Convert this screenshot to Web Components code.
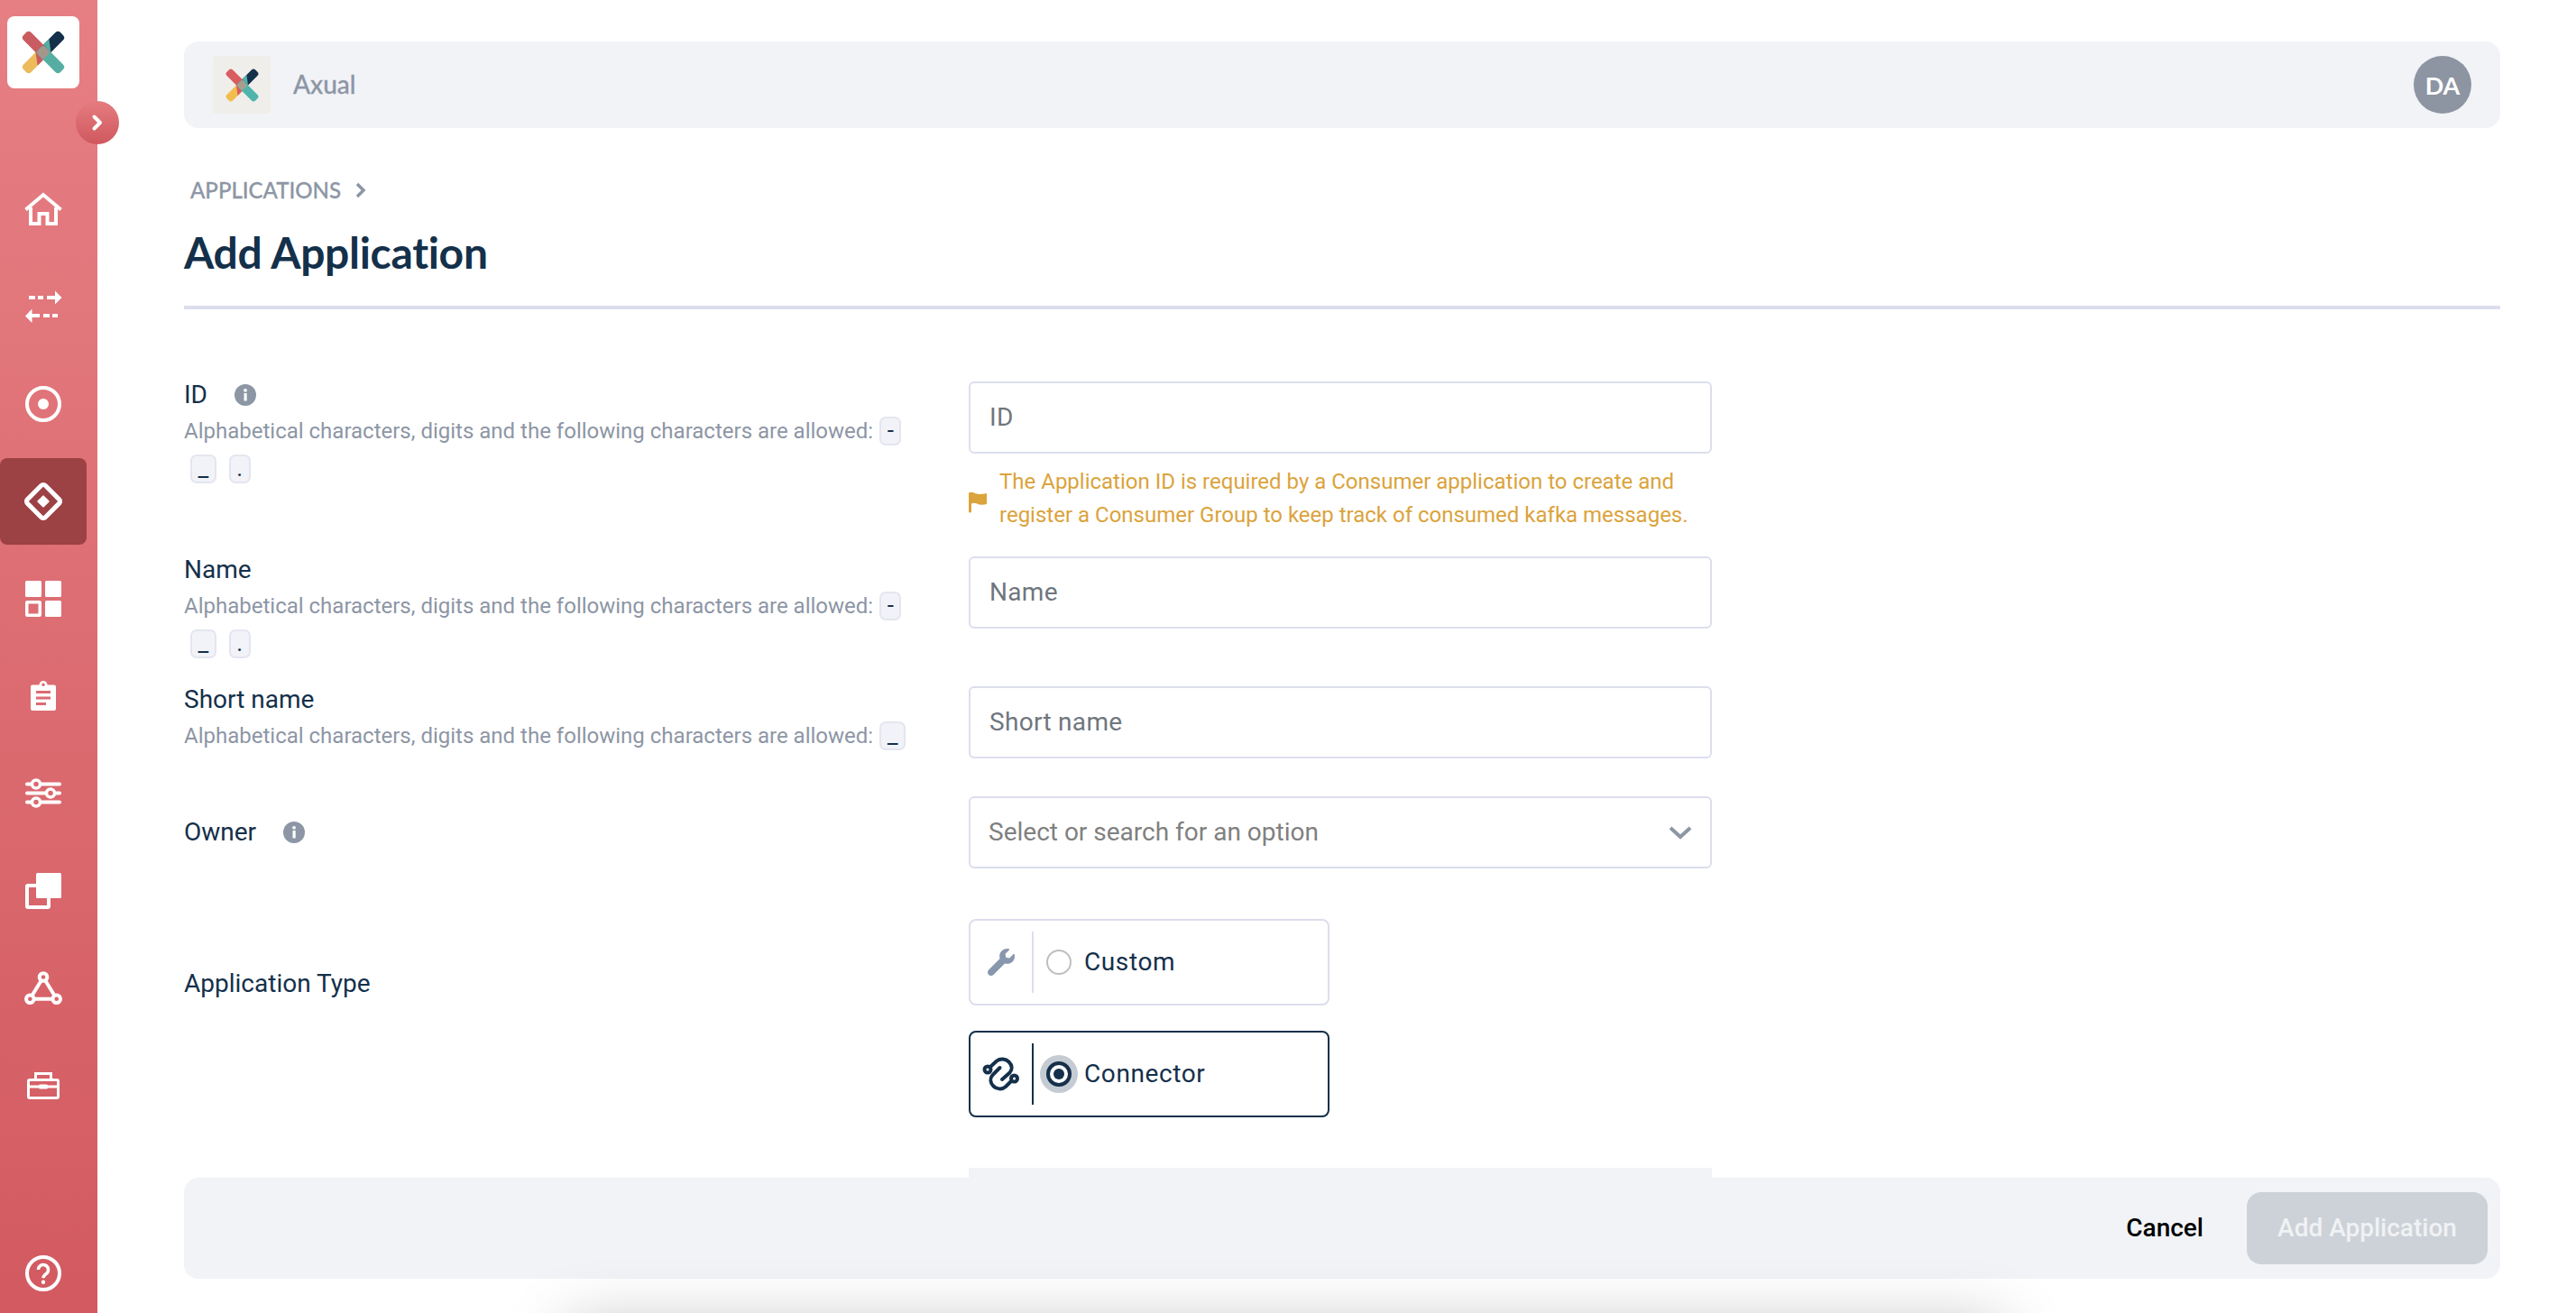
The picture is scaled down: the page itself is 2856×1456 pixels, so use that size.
<!DOCTYPE html>
<html lang="en">
<head>
<meta charset="utf-8">
<title>Add Application</title>
<style>
html,body{margin:0;padding:0;background:#fff}
body{font-family:Roboto,"Liberation Sans",sans-serif;color:#14304a}
</style>
</head>
<body>
<x-app>
  <x-sidebar slot="side">
    <x-nav-item icon="home"></x-nav-item>
    <x-nav-item icon="arrows"></x-nav-item>
    <x-nav-item icon="target"></x-nav-item>
    <x-nav-item icon="diamond" active></x-nav-item>
    <x-nav-item icon="grid"></x-nav-item>
    <x-nav-item icon="clipboard"></x-nav-item>
    <x-nav-item icon="sliders"></x-nav-item>
    <x-nav-item icon="copy"></x-nav-item>
    <x-nav-item icon="triangle"></x-nav-item>
    <x-nav-item icon="toolbox"></x-nav-item>
    <x-nav-item slot="bottom" icon="help"></x-nav-item>
  </x-sidebar>

  <x-topbar>Axual</x-topbar>
  <x-page-title crumb="APPLICATIONS">Add Application</x-page-title>

  <x-form>
    <x-field style="--row:194px" info>
      <span slot="label">ID</span>
      <span slot="hint">Alphabetical characters, digits and the following characters are allowed:<x-chip>-</x-chip><x-chip>_</x-chip><x-chip>.</x-chip></span>
      <x-input>ID</x-input>
      <x-warning>The Application ID is required by a Consumer application to create and register a Consumer Group to keep track of consumed kafka messages.</x-warning>
    </x-field>
    <x-field style="--row:144px">
      <span slot="label">Name</span>
      <span slot="hint">Alphabetical characters, digits and the following characters are allowed:<x-chip>-</x-chip><x-chip>_</x-chip><x-chip>.</x-chip></span>
      <x-input>Name</x-input>
    </x-field>
    <x-field style="--row:122px">
      <span slot="label">Short name</span>
      <span slot="hint">Alphabetical characters, digits and the following characters are allowed:<x-chip>_</x-chip></span>
      <x-input>Short name</x-input>
    </x-field>
    <x-field style="--row:136px;--label-h:79px" info>
      <span slot="label">Owner</span>
      <x-select>Select or search for an option</x-select>
    </x-field>
    <x-field style="--row:276px;--label-h:144px">
      <span slot="label">Application Type</span>
      <x-radio-card icon="wrench">Custom</x-radio-card>
      <x-radio-card icon="link" checked>Connector</x-radio-card>
    </x-field>
    <x-field-block></x-field-block>
  </x-form>

  <x-footer-bar slot="over">
    <x-button kind="link">Cancel</x-button>
    <x-button kind="primary">Add Application</x-button>
  </x-footer-bar>
</x-app>

<script>
const ICONS = {
  home:`<path fill="none" stroke="currentColor" stroke-width="4" d="M4.5 24.5 24 8l19.5 16.5M10 22v18h9.5V29h9v11H38V22"/>`,
  arrows:`<path fill="none" stroke="currentColor" stroke-width="4" d="M8 14h7M18 14h6M28 14h11M40 34H34M31 34h-7M20 34H11"/><path fill="currentColor" d="M37 6.500 44.500 14 37 21.500ZM11.500 26.500 4 34.500l7.500 7.500Z"/>`,
  target:`<circle cx="24" cy="24" r="18" fill="none" stroke="currentColor" stroke-width="4"/><circle cx="24" cy="24" r="6" fill="currentColor"/>`,
  diamond:`<rect x="10" y="10" width="28" height="28" rx="3" fill="none" stroke="currentColor" stroke-width="5" transform="rotate(45 24 24)"/><rect x="19" y="19" width="10" height="10" rx="1" fill="currentColor" transform="rotate(45 24 24)"/>`,
  grid:`<g fill="currentColor"><rect x="4" y="4" width="18" height="18" rx="1.500"/><rect x="26" y="4" width="18" height="18" rx="1.500"/><rect x="26" y="26" width="18" height="18" rx="1.500"/></g><rect x="5.750" y="27.750" width="14.500" height="14.500" rx=".5" fill="none" stroke="currentColor" stroke-width="3.500"/>`,
  clipboard:`<path fill="currentColor" fill-rule="evenodd" d="M12 11.500h7.500a4.500 4.500 0 0 1 9 0H36a2 2 0 0 1 2 2V38a2 2 0 0 1-2 2H12a2 2 0 0 1-2-2V13.500a2 2 0 0 1 2-2ZM24 9.500a1.800 1.800 0 1 0 0 3.600 1.800 1.800 0 0 0 0-3.600ZM16 18h16v3H16ZM16 24.500h16v3H16ZM16 31h11v3H16Z"/>`,
  sliders:`<g fill="none" stroke="currentColor" stroke-linecap="round"><path stroke-width="4" d="M6 13.500h4.500M21.500 13.500H42M6 23.500h20.500M37.500 23.500H42M6 33.500h4.500M21.500 33.500H42"/><g stroke-width="3.500"><circle cx="16" cy="13.500" r="4.500"/><circle cx="32" cy="23.500" r="4.500"/><circle cx="16" cy="33.500" r="4.500"/></g></g>`,
  copy:`<rect x="16" y="4" width="28" height="28" rx="1.500" fill="currentColor"/><rect x="6" y="18" width="24" height="24" rx="1" fill="none" stroke="currentColor" stroke-width="4"/>`,
  triangle:`<g fill="none" stroke="currentColor" stroke-width="4"><circle cx="24" cy="11.500" r="4.300"/><circle cx="9.300" cy="35.700" r="4.300"/><circle cx="38.700" cy="35.700" r="4.300"/><path d="M21.200 16.300 12.100 31M26.800 16.300 35.900 31M15 35.700h18"/></g>`,
  toolbox:`<g fill="none" stroke="currentColor" stroke-width="3"><rect x="7.500" y="17.500" width="33" height="20" rx="1.500"/><path d="M15.500 17v-6.500h17V17M8 25h32"/></g><rect x="19" y="22.500" width="10" height="5" rx="1.500" fill="currentColor"/>`,
  help:`<circle cx="24" cy="24" r="18" fill="none" stroke="currentColor" stroke-width="4"/><path fill="none" stroke="currentColor" stroke-width="3.500" d="M18.500 20a5.500 5.500 0 1 1 8.700 4.500c-2.200 1.500-3.200 2.500-3.200 4.800"/><circle cx="24" cy="33.800" r="2.200" fill="currentColor"/>`,
  wrench:`<path fill="currentColor" d="M507.730 109.100c-2.240-9.030-13.540-12.090-20.120-5.510l-74.360 74.360-67.880-11.310-11.310-67.880 74.360-74.360c6.620-6.620 3.430-17.900-5.660-20.160-47.380-11.740-99.550.91-136.580 37.930-39.640 39.640-50.550 97.100-34.050 147.200L18.740 402.760c-24.990 24.990-24.990 65.510 0 90.500 24.990 24.990 65.510 24.990 90.500 0l213.210-213.210c50.120 16.710 107.470 5.680 147.370-34.220 37.070-37.070 49.700-89.320 37.910-136.730z"/>`,
  link:`<g fill="none" stroke="currentColor" stroke-width="4" stroke-linecap="round"><circle cx="5" cy="13" r="3.500"/><circle cx="34.500" cy="23" r="3.500"/><path d="M8 10 15 3.500C19 .5 25 1 28.500 4.500 32.500 8.500 32.500 13 29.500 16.500L21 24"/><path d="M31 26 25 32C21 35.500 15 35 11.500 31.500 7.500 27.500 7.500 22.500 10.500 19L18.500 11"/></g>`
};

function define(name, css, html, init){
  const t = document.createElement('template');
  t.innerHTML = `<style>${css}</style>${html}`;
  customElements.define(name, class extends HTMLElement{
    constructor(){
      super();
      this.attachShadow({mode:'open'}).appendChild(t.content.cloneNode(true));
    }
    connectedCallback(){ if(init) init(this, this.shadowRoot); }
  });
}

define('x-app',`
  :host{display:flex;width:2856px;height:1456px;overflow:hidden;position:relative;background:#fff}
  main{flex:1;min-width:0;box-sizing:border-box;padding:46px 84px 0 96px;display:flex;flex-direction:column}
  .glow{position:absolute;left:630px;width:1590px;top:1470px;height:100px;box-shadow:0 0 70px 0 rgba(0,0,0,.26);pointer-events:none;z-index:3}
`,`
  <slot name="side"></slot>
  <main><slot></slot></main>
  <slot name="over"></slot>
  <div class="glow"></div>
`);

define('x-sidebar',`
  :host{flex:none;display:flex;flex-direction:column;width:108px;height:1456px;box-sizing:border-box;padding:18px 0 4px;
    background:linear-gradient(180deg,#e67f84 0%,#d25a60 100%);position:relative;z-index:2;color:#fff}
  .logo{width:80px;height:80px;margin-left:8px;background:#fff;border-radius:8px;display:flex;align-items:center;justify-content:center;flex:none}
  .toggle{position:absolute;left:84px;top:112px;width:48px;height:48px;border-radius:50%;background:linear-gradient(180deg,#e57c80,#cf585e);display:flex;align-items:center;justify-content:center}
  nav{display:flex;flex-direction:column;gap:12px;margin-top:86px;flex:1}
  .bottom{margin-top:auto;display:block}
  ::slotted([slot=bottom]){height:80px}
`,`
  <div class="logo"><x-logo size="66"></x-logo></div>
  <div class="toggle"><svg width="24" height="24" viewBox="0 0 24 24"><path d="M8.500 5.500 15 12l-6.500 6.500" fill="none" stroke="#fff" stroke-width="4" stroke-linecap="round" stroke-linejoin="round"/></svg></div>
  <nav><slot></slot></nav>
  <div class="bottom"><slot name="bottom"></slot></div>
`);

define('x-logo',`
  :host{display:block;line-height:0}
`,`<svg viewBox="-33 -33 66 66"><g transform="rotate(45)">
    <rect class="y" x="-6" y="0" width="12" height="29" rx="4"/>
    <rect class="d" x="-6" y="-29" width="12" height="29" rx="4"/>
    <path class="r" d="M6 6H-6L6 15Z"/>
    <path class="t" d="M-6-6H6L-6-15Z"/>
    <rect class="r" x="-29" y="-6" width="35" height="12" rx="4"/>
    <rect class="t" x="-6" y="-6" width="35" height="12" rx="4"/>
    <rect class="m" x="-5.500" y="-5.500" width="11" height="11" rx="2.500"/>
  </g></svg>`,(el,root)=>{
    const s = el.getAttribute('size')||'66';
    const svg = root.querySelector('svg');
    svg.setAttribute('width',s);svg.setAttribute('height',s);
    const b = el.hasAttribute('bright');
    const c = b ? {y:'#f1be4e',d:'#14304a',r:'#d85c60',t:'#4fb4ac',m:'#a89e90'} : {y:'#edbb5c',d:'#14304a',r:'#c95c60',t:'#56aea2',m:'#a5968b'};
    for(const k in c) root.querySelectorAll('.'+k).forEach(n=>n.setAttribute('fill',c[k]));
  });

define('x-nav-item',`
  :host{display:flex;align-items:center;justify-content:center;width:96px;height:96px;flex:none;border-radius:0 8px 8px 0;color:#fff;box-sizing:border-box}
  :host([active]){background:#9c4144;border-radius:8px}
`,`<svg width="48" height="48" viewBox="0 0 48 48"></svg>`,(el,root)=>{
  root.querySelector('svg').innerHTML = ICONS[el.getAttribute('icon')];
});

define('x-topbar',`
  :host{display:flex;align-items:center;height:96px;flex:none;box-sizing:border-box;padding:0 32px;background:#f2f3f7;border-radius:16px}
  .logo{width:64px;height:64px;border-radius:4px;background:#f0eeea;display:flex;align-items:center;justify-content:center}
  .name{margin:-2px 0 0 25px;font:500 28px/1 Lato,sans-serif;color:#8d96a5;-webkit-text-stroke:.3px #8d96a5}
  .avatar{margin-left:auto;width:64px;height:64px;border-radius:50%;background:#8d95a2;color:#fff;display:flex;align-items:center;justify-content:center;font:700 27px/1 Lato,sans-serif}
`,`
  <div class="logo"><x-logo size="51" bright></x-logo></div>
  <div class="name"><slot></slot></div>
  <div class="avatar">DA</div>
`);

define('x-page-title',`
  :host{display:block;flex:none}
  .crumb{display:flex;align-items:center;height:36px;margin:51px 0 0 7px;font:500 24px/36px Lato,sans-serif;color:#8d96a5;-webkit-text-stroke:.3px #8d96a5}
  .crumb svg{margin-left:16px}
  h1{margin:19px 0 0;font:700 48px/64px Lato,sans-serif;color:#14304a;letter-spacing:-.3px}
  hr{margin:27px 0 0;height:4px;background:#dcdeee;border:0}
`,`
  <div class="crumb"><span class="t"></span><svg width="12" height="18" viewBox="0 0 12 18"><path d="M2 2l7 7-7 7" fill="none" stroke="#8d96a5" stroke-width="3.500"/></svg></div>
  <h1><slot></slot></h1>
  <hr>
`,(el,root)=>{ root.querySelector('.t').textContent = el.getAttribute('crumb'); });

define('x-form',`
  :host{display:block;margin-top:80px;flex:none}
`,`<slot></slot>`);

define('x-field',`
  :host{display:grid;grid-template-columns:870px 824px;height:var(--row,auto);align-content:start}
  .lab{align-self:start}
  .lab.center{display:flex;flex-direction:column;justify-content:center;height:var(--label-h)}
  .label{display:flex;align-items:center;font:400 28px/30px Roboto,sans-serif;color:#14304a}
  .label svg{margin-left:30px;display:none}
  :host([info]) .label svg{display:block}
  .hint{display:block;width:820px;margin-top:4px;font:400 24px/42px Roboto,sans-serif;color:#8d96a5}
  .hint.empty{display:none}
  .ctl{display:flex;flex-direction:column}
`,`
  <div class="lab"><div class="label"><slot name="label"></slot><svg width="24" height="24" viewBox="0 0 24 24"><circle cx="12" cy="12" r="12" fill="#8d96a5"/><rect x="10.500" y="10" width="3.200" height="8.500" rx=".6" fill="#fff"/><circle cx="12" cy="6.800" r="1.900" fill="#fff"/></svg></div>
  <div class="hint"><slot name="hint"></slot></div></div>
  <div class="ctl"><slot></slot></div>
`,(el,root)=>{
  if(!el.querySelector('[slot=hint]')) root.querySelector('.hint').classList.add('empty');
  if(el.style.getPropertyValue('--label-h')) root.querySelector('.lab').classList.add('center');
});

define('x-chip',`
  :host{display:inline-block;vertical-align:top;box-sizing:border-box;height:32px;margin:0 7px;padding:0 6.500px;border:2px solid #e4e6ef;border-radius:7px;background:#f2f3f8;font:400 26px/26px Roboto,sans-serif;color:#14304a;transform:translateY(5px)}
`,`<slot></slot>`);

define('x-input',`
  :host{display:flex;align-items:center;box-sizing:border-box;height:80px;flex:none;border:2px solid #dcdeee;border-radius:6px;background:#fff;padding:0 21px;font:400 28px/1 Roboto,sans-serif;letter-spacing:.3px;color:#6f767e}
`,`<slot></slot>`);

define('x-select',`
  :host{display:flex;align-items:center;justify-content:space-between;box-sizing:border-box;height:80px;flex:none;border:2px solid #dcdeee;border-radius:6px;background:#fff;padding:0 20px;font:400 28px/1 Roboto,sans-serif;color:#808080}
  svg{flex:none}
`,`<slot></slot><svg width="26" height="16" viewBox="0 0 26 16"><path d="M2 3l11 10L24 3" fill="none" stroke="#8d96a5" stroke-width="4"/></svg>`);

define('x-warning',`
  :host{display:flex;align-items:center;margin-top:13px;font:400 24px/37px Roboto,sans-serif;color:#dba33c}
  svg{flex:none;margin-right:14px;margin-top:7px}
`,`<svg width="20" height="24" viewBox="0 0 20 24"><path fill="#dba33c" d="M0 1.500C2 .5 4 .3 6 1.500c3 1.800 8 2 14 .5v12c-4 1.200-8 1-11-.5-2-1-4-.8-6 0V22a1.500 1.500 0 0 1-3 0Z"/></svg><span><slot></slot></span>`);

define('x-radio-card',`
  :host{display:flex;align-items:center;box-sizing:border-box;width:400px;height:96px;flex:none;border:2px solid #dcdeee;border-radius:8px;background:#fff;margin-bottom:28px;font:400 28px/1 Roboto,sans-serif;letter-spacing:.6px;color:#14304a;padding:12px 0}
  :host([checked]){border-color:#14304a}
  .ic{flex:none;width:68px;display:flex;align-items:center;justify-content:center;color:#8797ad;height:100%}
  :host([checked]) .ic{color:#14304a}
  .sep{flex:none;width:2px;height:100%;background:#dcdeee}
  :host([checked]) .sep{background:#14304a}
  .r{flex:none;box-sizing:border-box;width:28px;height:28px;margin:0 14px 0 14px;border-radius:50%;border:2px solid #bfbfbf;background:#fff;display:flex;align-items:center;justify-content:center}
  .r i{display:none;width:12px;height:12px;border-radius:50%;background:#14304a}
  :host([checked]) .r{border:4px solid #14304a;box-shadow:0 0 0 7px #c5cbd2}
  :host([checked]) .r i{display:block}
`,`<div class="ic"><svg></svg></div><div class="sep"></div><div class="r"><i></i></div><span><slot></slot></span>`,(el,root)=>{
  const svg = root.querySelector('svg'), name = el.getAttribute('icon');
  svg.innerHTML = ICONS[name];
  if(name==='wrench'){svg.setAttribute('width',30);svg.setAttribute('height',30);svg.setAttribute('viewBox','0 0 512 512');}
  else{svg.setAttribute('width',40);svg.setAttribute('height',36);svg.setAttribute('viewBox','0 0 40 36');svg.style.overflow='visible';}
});

define('x-field-block',`
  :host{display:block;width:824px;height:40px;margin:0 0 0 870px;background:#f2f3f7}
`,``);

define('x-footer-bar',`
  :host{position:absolute;left:204px;top:1306px;width:2568px;height:112px;box-sizing:border-box;padding:16px 14px 16px 0;display:flex;justify-content:flex-end;align-items:center;gap:48px;background:#f2f3f7;border-radius:16px;z-index:1}
`,`<slot></slot>`);

define('x-button',`
  :host{display:flex;align-items:center;justify-content:center;font:500 28px/1 Roboto,sans-serif;color:#000}
  :host([kind=primary]){box-sizing:border-box;width:267px;height:80px;background:#cdd2d8;border-radius:16px;color:rgba(255,255,255,.72)}
`,`<slot></slot>`);
</script>
</body>
</html>
